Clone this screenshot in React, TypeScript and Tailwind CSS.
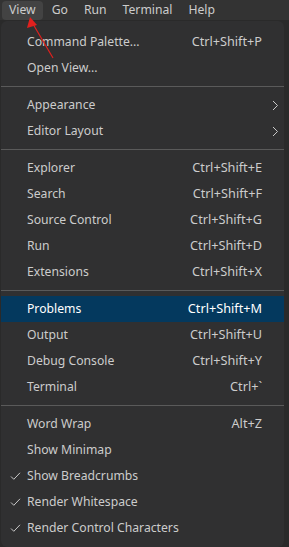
import React from 'react';

type Item =
  | { kind: 'sep' }
  | { kind: 'item'; label: string; keys?: string; sub?: boolean; checked?: boolean; active?: boolean };

const items: Item[] = [
  { kind: 'item', label: 'Command Palette...', keys: 'Ctrl+Shift+P' },
  { kind: 'item', label: 'Open View...' },
  { kind: 'sep' },
  { kind: 'item', label: 'Appearance', sub: true },
  { kind: 'item', label: 'Editor Layout', sub: true },
  { kind: 'sep' },
  { kind: 'item', label: 'Explorer', keys: 'Ctrl+Shift+E' },
  { kind: 'item', label: 'Search', keys: 'Ctrl+Shift+F' },
  { kind: 'item', label: 'Source Control', keys: 'Ctrl+Shift+G' },
  { kind: 'item', label: 'Run', keys: 'Ctrl+Shift+D' },
  { kind: 'item', label: 'Extensions', keys: 'Ctrl+Shift+X' },
  { kind: 'sep' },
  { kind: 'item', label: 'Problems', keys: 'Ctrl+Shift+M', active: true },
  { kind: 'item', label: 'Output', keys: 'Ctrl+Shift+U' },
  { kind: 'item', label: 'Debug Console', keys: 'Ctrl+Shift+Y' },
  { kind: 'item', label: 'Terminal', keys: 'Ctrl+`' },
  { kind: 'sep' },
  { kind: 'item', label: 'Word Wrap', keys: 'Alt+Z' },
  { kind: 'item', label: 'Show Minimap' },
  { kind: 'item', label: 'Show Breadcrumbs', checked: true },
  { kind: 'item', label: 'Render Whitespace', checked: true },
  { kind: 'item', label: 'Render Control Characters', checked: true },
];

const topMenus = ['View', 'Go', 'Run', 'Terminal', 'Help'];

const Check = () => (
  <svg width="11" height="10" viewBox="0 0 11 10" fill="none">
    <path d="M1 5.5 L3.8 8.3 L10 1.8" stroke="#c8c8c8" strokeWidth="1" />
  </svg>
);

const Chevron = () => (
  <svg width="7" height="11" viewBox="0 0 7 11" fill="none">
    <path d="M1 1 L5.5 5.5 L1 10" stroke="#c8c8c8" strokeWidth="1" />
  </svg>
);

export default function App() {
  return (
    <div
      className="relative w-[289px] h-[547px] overflow-hidden bg-[#2a2a2a] text-[#cccccc] text-[12.2px]"
      style={{ fontFamily: '"Noto Sans", "Open Sans", sans-serif' }}
    >
      {/* menu bar */}
      <div className="flex h-[20px] items-center bg-[#333333] pl-[2px] text-[12.2px]">
        {topMenus.map((m, i) => (
          <div
            key={m}
            className={
              'h-[19px] flex items-center px-[7px] mr-[2px] rounded-[4px] leading-none ' +
              (i === 0 ? 'bg-[#434343]' : '')
            }
          >
            {m}
          </div>
        ))}
      </div>

      {/* dropdown */}
      <div className="ml-px mt-px w-[283px] rounded-[6px] bg-[#303031] pt-[8px] pb-[6px]">
        {items.map((it, i) =>
          it.kind === 'sep' ? (
            <div key={i} className="h-[11px] flex items-center">
              <div className="h-px w-full bg-[#5a5a5a]" />
            </div>
          ) : (
            <div
              key={i}
              className={
                'flex h-[26px] items-center ' +
                (it.active ? 'bg-[#04395e] text-white' : '')
              }
            >
              <div className="w-[26px] flex justify-center pl-[2px]">{it.checked && <Check />}</div>
              <div className="flex-1 whitespace-nowrap">{it.label}</div>
              {it.keys && <div className="whitespace-nowrap text-[12.7px]">{it.keys}</div>}
              <div className="w-[22px] flex justify-center pl-[4px]">{it.sub && <Chevron />}</div>
            </div>
          )
        )}
      </div>

      {/* red annotation arrow */}
      <svg className="absolute left-0 top-0" width="80" height="70" viewBox="0 0 80 70">
        <line x1="33" y1="24" x2="53" y2="58" stroke="#e0201e" strokeWidth="1.2" />
        <polygon points="30,17 27,28 37,25" fill="#e0201e" />
      </svg>
    </div>
  );
}
